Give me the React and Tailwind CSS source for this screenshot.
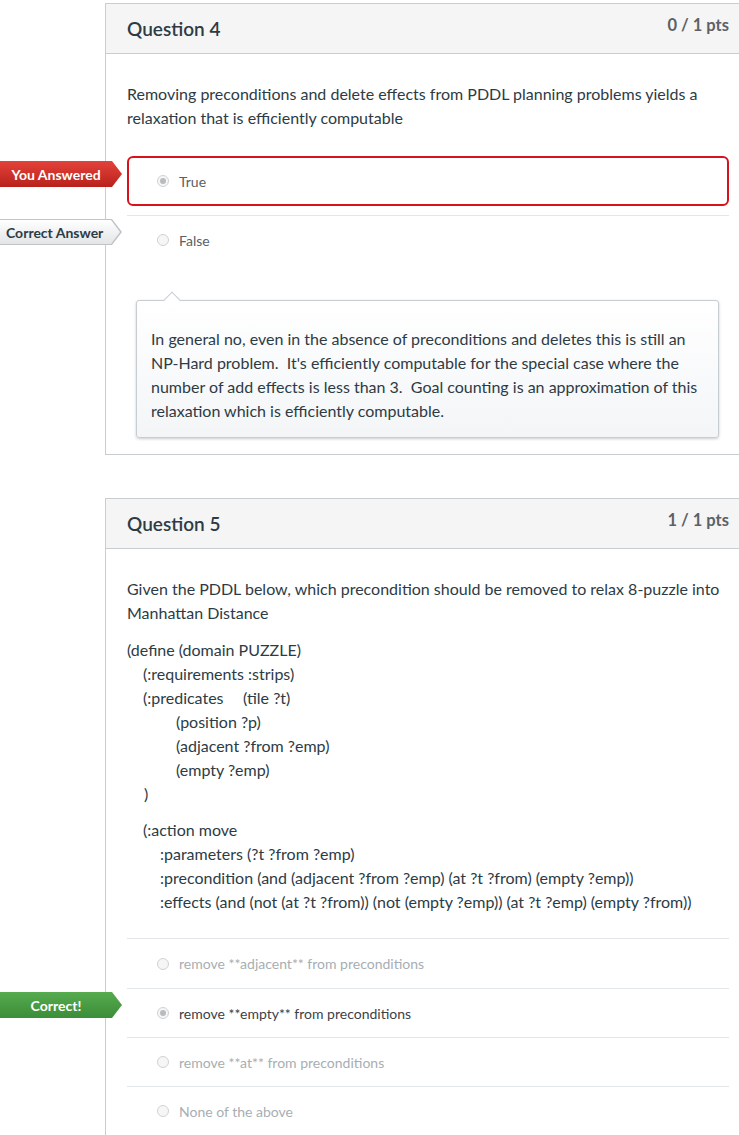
import React from 'react';

const tagShape = { clipPath: 'polygon(0 0, 112px 0, 122px 50%, 112px 100%, 0 100%)' };

const Tag = ({ kind, children, top = 'top-[4px]' }) => {
  if (kind === 'neutral') {
    return (
      <div className={`absolute left-[-127px] ${top} w-[122px] h-[26px] bg-[#bfc4c7]`} style={tagShape}>
        <div
          className="absolute left-0 top-[1px] w-[121px] h-[24px] bg-gradient-to-b from-white to-[#e3e5e6] flex items-center pl-[6px] text-[14px] font-bold text-[#2d3b45]"
          style={{ clipPath: 'polygon(0 0, 111px 0, 120px 50%, 111px 100%, 0 100%)' }}
        >
          {children}
        </div>
      </div>
    );
  }
  const bg =
    kind === 'wrong'
      ? 'bg-gradient-to-b from-[#e4423a] to-[#b8211b]'
      : 'bg-gradient-to-b from-[#56ab4f] to-[#3b8d37]';
  return (
    <div
      className={`absolute left-[-127px] ${top} w-[122px] h-[26px] ${bg} flex items-center justify-center pr-[10px] text-[14px] font-bold text-white`}
      style={tagShape}
    >
      {children}
    </div>
  );
};

const Radio = ({ checked }) => (
  <span className="w-[12px] h-[12px] rounded-full border border-[#cfd2d4] bg-[#f6f6f6] flex items-center justify-center shrink-0">
    {checked && <span className="w-[6px] h-[6px] rounded-full bg-[#b9bcbe]" />}
  </span>
);

const Answer = ({ text, checked, tone, tag, tagKind, tagTop, boxed, first }) => {
  const color = tone === 'dark' ? 'text-[#3b4247]' : tone === 'mid' ? 'text-[#5a6064]' : 'text-[#a7aeb3]';
  if (boxed) {
    return (
      <div className="relative">
        {tag && <Tag kind={tagKind} top={tagTop}>{tag}</Tag>}
        <div className="h-[50px] border-2 border-[#d8121b] rounded-[6px] flex items-center gap-[10px] pl-[28px]">
          <Radio checked={checked} />
          <span className={`text-[14px] ${color}`}>{text}</span>
        </div>
      </div>
    );
  }
  return (
    <div className={`relative h-[49px] ${first ? '' : 'border-t border-[#e3e6e8]'} flex items-center gap-[10px] pl-[30px]`}>
      {tag && <Tag kind={tagKind} top={tagTop}>{tag}</Tag>}
      <Radio checked={checked} />
      <span className={`text-[14px] ${color}`}>{text}</span>
    </div>
  );
};

const Header = ({ title, pts }) => (
  <div className="h-[50px] bg-[#f5f5f5] border-b border-[#c7cdd1] flex justify-between pl-[21px] pr-[10px]">
    <h2 className="text-[19px] font-semibold text-[#2d3b45] pt-[12px] leading-[26px]">{title}</h2>
    <span className="text-[16.5px] font-bold text-[#5b6166] pt-[9px] leading-[24px]">{pts}</span>
  </div>
);

const pddl = [
  { t: '(define (domain PUZZLE)', pad: 'pl-0' },
  { t: '(:requirements :strips)', pad: 'pl-[16px]' },
  { t: '(:predicates', pad: 'pl-[16px]', extra: '(tile ?t)' },
  { t: '(position ?p)', pad: 'pl-[49px]' },
  { t: '(adjacent ?from ?emp)', pad: 'pl-[49px]' },
  { t: '(empty ?emp)', pad: 'pl-[49px]' },
  { t: ')', pad: 'pl-[17px]' },
];

const pddl2 = [
  { t: '(:action move', pad: 'pl-[16px]' },
  { t: ':parameters (?t ?from ?emp)', pad: 'pl-[33px]' },
  { t: ':precondition (and (adjacent ?from ?emp) (at ?t ?from) (empty ?emp))', pad: 'pl-[33px]' },
  { t: ':effects (and (not (at ?t ?from)) (not (empty ?emp)) (at ?t ?emp) (empty ?from))', pad: 'pl-[33px]' },
];

export default function App() {
  return (
    <div className="bg-white min-h-[1135px] font-['Lato','Noto_Sans',sans-serif] text-[#2d3b45] pt-[3px] overflow-hidden">
      {/* Question 4 */}
      <div className="ml-[105px] border-l border-t border-b border-[#c7cdd1]">
        <Header title="Question 4" pts="0 / 1 pts" />
        <div className="pl-[21px] pr-[10px] pt-[28px] pb-[16px]">
          <p className="text-[16px] leading-6 pr-[20px]">
            Removing preconditions and delete effects from PDDL planning problems yields a relaxation that is efficiently computable
          </p>
          <div className="mt-[26px]">
            <Answer text="True" checked tone="mid" tag="You Answered" tagKind="wrong" tagTop="top-[5px]" boxed />
            <div className="mt-[9px]">
              <Answer text="False" tone="mid" tag="Correct Answer" tagKind="neutral" tagTop="top-[3px]" />
            </div>
          </div>
          <div className="relative mt-[36px] ml-[9px] mr-[10px]">
            <div className="absolute left-[30px] top-[-6px] w-[12px] h-[12px] rotate-45 bg-white border-l border-t border-[#c7cdd1]" />
            <div className="rounded-[3px] border border-[#c7cdd1] bg-gradient-to-b from-white to-[#f3f5f7] shadow-[0_1px_3px_rgba(0,0,0,0.2)] pl-[14px] pr-[20px] pt-[26px] pb-[14px]">
              <p className="relative text-[16px] leading-6 text-[#2d3b45]">
                In general no, even in the absence of preconditions and deletes this is still an NP-Hard problem.&nbsp; It's efficiently computable for the special case where the number of add effects is less than 3.&nbsp; Goal counting is an approximation of this relaxation which is efficiently computable.
              </p>
            </div>
          </div>
        </div>
      </div>

      {/* Question 5 */}
      <div className="ml-[105px] mt-[43px] border-l border-t border-[#c7cdd1]">
        <Header title="Question 5" pts="1 / 1 pts" />
        <div className="pl-[21px] pr-[10px] pt-[28px]">
          <p className="text-[16px] leading-6 pr-[6px]">
            Given the PDDL below, which precondition should be removed to relax 8-puzzle into Manhattan Distance
          </p>
          <div className="mt-[13px] text-[16px] leading-6">
            {pddl.map((l, i) => (
              <div key={i} className={`${l.pad} flex`}>
                <span className={l.extra ? 'w-[100px] shrink-0' : ''}>{l.t}</span>
                {l.extra && <span>{l.extra}</span>}
              </div>
            ))}
          </div>
          <div className="mt-[12px] text-[16px] leading-6">
            {pddl2.map((l, i) => (
              <div key={i} className={l.pad}>{l.t}</div>
            ))}
          </div>
          <div className="mt-[24px] border-t border-[#e3e6e8]">
            <Answer text="remove **adjacent** from preconditions" tone="light" first />
            <Answer text="remove **empty** from preconditions" checked tone="dark" tag="Correct!" tagKind="right" tagTop="top-[3px]" />
            <Answer text="remove **at** from preconditions" tone="light" />
            <Answer text="None of the above" tone="light" />
          </div>
        </div>
      </div>
    </div>
  );
}
